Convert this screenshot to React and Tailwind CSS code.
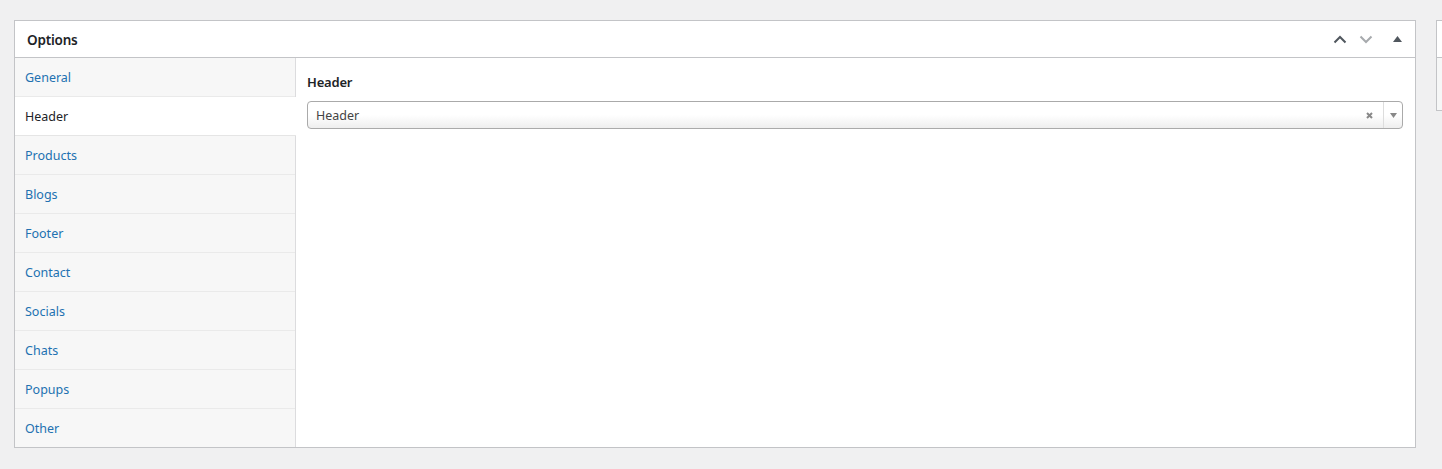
import React, { useState } from "react";

const tabs = ["General", "Header", "Products", "Blogs", "Footer", "Contact", "Socials", "Chats", "Popups", "Other"];

const font = { fontFamily: '"Noto Sans", "Open Sans", Arial, sans-serif' };

const App = () => {
  const [active, setActive] = useState("Header");

  return (
    <div className="min-h-[469px] w-[1442px] overflow-hidden bg-[#f0f0f1] pl-[14px] pt-[20px]" style={font}>
      <div className="flex gap-[20px]">
        {/* Options box */}
        <div className="w-[1402px] shrink-0 border border-[#c3c4c7] bg-white">
          <div className="flex h-[37px] items-center justify-between border-b border-[#c3c4c7] pl-[12px] pr-[5px]">
            <h2 className="pt-[2px] text-[13.5px] font-semibold tracking-[-0.2px] text-[#1d2327]">Options</h2>
            <div className="flex items-center">
              <button className="flex h-[26px] w-[26px] items-center justify-center">
                <svg width="14" height="9" viewBox="0 0 14 9">
                  <path d="M1.5 7.5 L7 2 L12.5 7.5" fill="none" stroke="#50575e" strokeWidth="2" />
                </svg>
              </button>
              <button className="flex h-[26px] w-[26px] items-center justify-center">
                <svg width="14" height="9" viewBox="0 0 14 9">
                  <path d="M1.5 1.5 L7 7 L12.5 1.5" fill="none" stroke="#a7aaad" strokeWidth="2" />
                </svg>
              </button>
              <button className="ml-[5px] flex h-[26px] w-[26px] items-center justify-center">
                <svg width="9" height="6" viewBox="0 0 9 6">
                  <path d="M0 6 L4.5 0 L9 6 Z" fill="#50575e" />
                </svg>
              </button>
            </div>
          </div>

          <div className="flex">
            {/* Tabs */}
            <ul className="w-[281px] shrink-0 border-r border-[#dcdcde] bg-[#f7f7f7]">
              {tabs.map((tab) => (
                <li
                  key={tab}
                  onClick={() => setActive(tab)}
                  className={
                    tab === active
                      ? "relative -mr-px flex h-[39px] cursor-pointer items-center border-b border-[#e5e5e5] bg-white pl-[10px] pt-[2px] text-[12.5px] text-[#1d2327]"
                      : "flex h-[39px] cursor-pointer items-center border-b border-[#eaeaea] pl-[10px] pt-[2px] text-[12.5px] text-[#2271b1] last:h-[38px] last:border-b-0"
                  }
                >
                  {tab}
                </li>
              ))}
            </ul>

            {/* Panel */}
            <div className="flex-1 pl-[11px] pr-[12px] pt-[14px]">
              <label className="block text-[13px] font-semibold leading-[20px] tracking-[-0.2px] text-[#1d2327]">{active}</label>
              <div className="mt-[9px] flex h-[28px] items-center rounded-[4px] border border-[#aaaaaa] bg-gradient-to-b from-white from-50% to-[#eeeeee]">
                <span className="flex-1 pl-[8px] pt-[3px] text-[12.5px] text-[#444444]">{active}</span>
                <span className="mr-[10px] flex items-center">
                  <svg width="7" height="7" viewBox="0 0 7 7">
                    <path d="M1 1 L6 6 M6 1 L1 6" stroke="#888888" strokeWidth="2" />
                  </svg>
                </span>
                <span className="flex h-full w-[19px] items-center justify-center border-l border-[#dddddd]">
                  <svg width="7" height="5" viewBox="0 0 7 5">
                    <path d="M0 0 L7 0 L3.5 5 Z" fill="#888888" />
                  </svg>
                </span>
              </div>
            </div>
          </div>
        </div>

        {/* Side box peeking in */}
        <div className="h-[91px] w-[280px] shrink-0 border border-[#c3c4c7] bg-[#f6f7f7]">
          <div className="h-[37px] border-b border-[#c3c4c7] bg-white" />
        </div>
      </div>
    </div>
  );
};

export default App;
